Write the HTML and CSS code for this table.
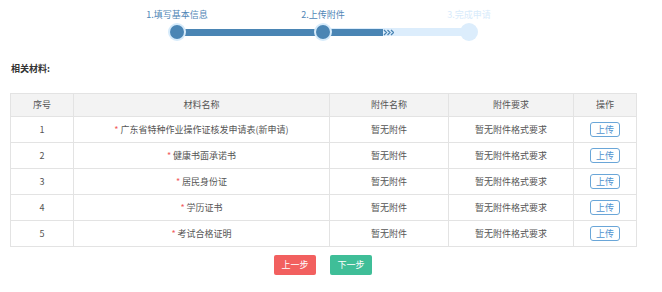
FILE: index.html
```html
<!DOCTYPE html>
<html lang="zh-CN">
<head>
<meta charset="utf-8">
<link rel="stylesheet" href="styles.css">
</head>
<body>
<div class="page">
  <div class="stepper">
    <div class="labels">
      <span class="lbl done">1.填写基本信息</span>
      <span class="lbl done">2.上传附件</span>
      <span class="lbl todo">3.完成申请</span>
    </div>
    <div class="track">
      <span class="dot"></span>
      <span class="seg dark"></span>
      <span class="dot"></span>
      <span class="seg mixed"><span class="fill"></span><svg class="chev" width="11" height="7" viewBox="0 0 11 7"><path d="M1 1l2.5 2.5L1 6M4.5 1L7 3.5 4.5 6M8 1l2.5 2.5L8 6" fill="none" stroke="#4a85b4" stroke-width="1.3"/></svg><span class="rest"></span></span>
      <span class="dot light"></span>
    </div>
  </div>

  <div class="section-title">相关材料:</div>

  <table class="materials">
    <thead>
      <tr><th class="c-no">序号</th><th class="c-name">材料名称</th><th class="c-att">附件名称</th><th class="c-req">附件要求</th><th class="c-op">操作</th></tr>
    </thead>
    <tbody>
      <tr><td>1</td><td><span class="star">*</span> 广东省特种作业操作证核发申请表(新申请)</td><td>暂无附件</td><td>暂无附件格式要求</td><td><button class="upload">上传</button></td></tr>
      <tr><td>2</td><td><span class="star">*</span> 健康书面承诺书</td><td>暂无附件</td><td>暂无附件格式要求</td><td><button class="upload">上传</button></td></tr>
      <tr><td>3</td><td><span class="star">*</span> 居民身份证</td><td>暂无附件</td><td>暂无附件格式要求</td><td><button class="upload">上传</button></td></tr>
      <tr><td>4</td><td><span class="star">*</span> 学历证书</td><td>暂无附件</td><td>暂无附件格式要求</td><td><button class="upload">上传</button></td></tr>
      <tr><td>5</td><td><span class="star">*</span> 考试合格证明</td><td>暂无附件</td><td>暂无附件格式要求</td><td><button class="upload">上传</button></td></tr>
    </tbody>
  </table>

  <div class="actions">
    <button class="btn prev">上一步</button>
    <button class="btn next">下一步</button>
  </div>
</div>
</body>
</html>
```

FILE: styles.css
```css
* { box-sizing: border-box; }
html, body { margin: 0; padding: 0; background: #fff; }
body {
  font-family: "Microsoft YaHei", "Noto Sans CJK SC", "Noto Sans", sans-serif;
  font-size: 9px;
  color: #555;
}
.page { width: 662px; height: 292px; padding: 0 26px 0 10px; }

.stepper { padding-top: 9px; margin-left: 160px; width: 310px; }
.labels { display: grid; grid-template-columns: 146px 146px 146px; margin-left: -66px; width: 438px; }
.lbl { text-align: center; line-height: 12px; font-size: 9px; }
.lbl.done { color: #4f86b6; }
.lbl.todo { color: #d8ebfb; }
.track { display: flex; align-items: center; margin-top: 2px; height: 18px; }
.dot {
  width: 14px; height: 14px; border-radius: 50%;
  background: #4a85b4;
  box-shadow: 0 0 0 2px #d6ebfb;
  flex: none;
  position: relative; z-index: 1;
}
.dot.light { width: 18px; height: 18px; background: #dcedfc; box-shadow: none; margin-left: -2px; }
.seg { height: 7px; flex: none; }
.seg.dark { width: 132px; background: #4a85b4; }
.seg.mixed { width: 132px; display: flex; align-items: center; height: 8px; background: #dcedfc; }
.seg.mixed .fill { width: 53px; height: 7px; background: #4a85b4; }
.seg.mixed .chev { display: block; flex: none; }
.seg.mixed .rest { flex: 1; }

.section-title { font-weight: bold; color: #333; margin: 22px 0 0 1px; line-height: 12px; font-size: 9px; }

.materials {
  margin-top: 18px;
  width: 626px;
  border-collapse: collapse;
  table-layout: fixed;
}
.materials th, .materials td {
  border: 1px solid #e3e3e3;
  text-align: center;
  font-weight: normal;
  color: #555;
  font-size: 9px;
  line-height: 12px;
  padding: 0;
}
.materials th { height: 23px; background: #f3f3f3; }
.materials td { height: 26px; }
.c-no { width: 63px; }
.c-name { width: 256px; }
.c-att { width: 119px; }
.c-req { width: 125px; }
.c-op { width: 63px; }
.star { color: #f25c5c; }
.upload {
  width: 30px; height: 15px; padding: 0;
  border: 1px solid #6aa6d8; border-radius: 3px;
  background: #fff; color: #4f93cf;
  font-family: inherit; font-size: 9px; line-height: 13px;
}

.actions { display: flex; justify-content: center; gap: 14px; width: 626px; margin-top: 8px; }
.btn {
  width: 42px; height: 20px; border: none; border-radius: 2px; color: #fff;
  font-family: inherit; font-size: 9px; line-height: 20px; padding: 0;
}
.btn.prev { background: #f2605f; }
.btn.next { background: #3fbe98; }
```
